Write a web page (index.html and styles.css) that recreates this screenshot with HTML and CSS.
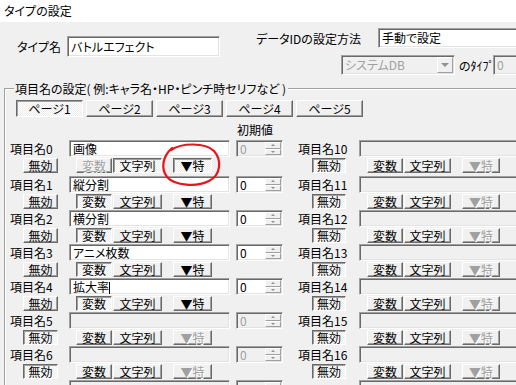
FILE: index.html
```html
<!DOCTYPE html>
<html lang="ja">
<head>
<meta charset="utf-8">
<title>タイプの設定</title>
<link rel="stylesheet" href="styles.css">
</head>
<body>
<div class="win">
  <div class="titlebar">タイプの設定</div>
  <div class="top">
    <div class="tn">
      <span class="tn-label">タイプ名</span>
      <div class="edit tn-edit">バトルエフェクト</div>
    </div>
    <div class="did">
      <div class="did-row1">
        <span class="did-label">データIDの設定方法</span>
        <div class="edit did-edit">手動で設定</div>
      </div>
      <div class="did-row2">
        <div class="edit dis combo"><span class="combo-text">システムDB</span><span class="dd"><i class="td"></i></span></div>
        <span class="type-label">のﾀｲﾌﾟ</span>
        <div class="edit dis type-edit">0</div>
      </div>
    </div>
  </div>
  <div class="group">
    <div class="ghead"><span class="legend">項目名の設定( 例:キャラ名・HP・ピンチ時セリフなど )</span></div>
    <div class="pages">
      <div class="btn pressed page">ページ1</div>
      <div class="btn page">ページ2</div>
      <div class="btn page">ページ3</div>
      <div class="btn page">ページ4</div>
      <div class="btn page">ページ5</div>
    </div>
    <div class="initrow">初期値</div>
    <div class="rows">
      <div class="row">
        <div class="lineA">
          <span class="ilabel">項目名0</span>
          <div class="edit name">画像</div>
          <div class="edit spin dis"><span class="spin-val">0</span><span class="ud"><span class="ud-b"><i class="tu"></i></span><span class="ud-b"><i class="td"></i></span></span></div>
          <span class="ilabel rlabel">項目名10</span>
          <div class="edit dis rname"></div>
        </div>
        <div class="lineB">
          <div class="btn b-mu">無効</div>
          <div class="btn b-hen distext">変数</div>
          <div class="btn b-moji pressed">文字列</div>
          <div class="btn b-toku pressed">▼特</div>
          <div class="btn b-rmu pressed">無効</div>
          <div class="btn b-rhen">変数</div>
          <div class="btn b-rmoji">文字列</div>
          <div class="btn b-rtoku distext">▼特</div>
        </div>
      </div>
      <div class="row">
        <div class="lineA">
          <span class="ilabel">項目名1</span>
          <div class="edit name">縦分割</div>
          <div class="edit spin"><span class="spin-val">0</span><span class="ud"><span class="ud-b"><i class="tu"></i></span><span class="ud-b"><i class="td"></i></span></span></div>
          <span class="ilabel rlabel">項目名11</span>
          <div class="edit dis rname"></div>
        </div>
        <div class="lineB">
          <div class="btn b-mu">無効</div>
          <div class="btn b-hen pressed">変数</div>
          <div class="btn b-moji">文字列</div>
          <div class="btn b-toku">▼特</div>
          <div class="btn b-rmu pressed">無効</div>
          <div class="btn b-rhen">変数</div>
          <div class="btn b-rmoji">文字列</div>
          <div class="btn b-rtoku distext">▼特</div>
        </div>
      </div>
      <div class="row">
        <div class="lineA">
          <span class="ilabel">項目名2</span>
          <div class="edit name">横分割</div>
          <div class="edit spin"><span class="spin-val">0</span><span class="ud"><span class="ud-b"><i class="tu"></i></span><span class="ud-b"><i class="td"></i></span></span></div>
          <span class="ilabel rlabel">項目名12</span>
          <div class="edit dis rname"></div>
        </div>
        <div class="lineB">
          <div class="btn b-mu">無効</div>
          <div class="btn b-hen pressed">変数</div>
          <div class="btn b-moji">文字列</div>
          <div class="btn b-toku">▼特</div>
          <div class="btn b-rmu pressed">無効</div>
          <div class="btn b-rhen">変数</div>
          <div class="btn b-rmoji">文字列</div>
          <div class="btn b-rtoku distext">▼特</div>
        </div>
      </div>
      <div class="row">
        <div class="lineA">
          <span class="ilabel">項目名3</span>
          <div class="edit name">アニメ枚数</div>
          <div class="edit spin"><span class="spin-val">0</span><span class="ud"><span class="ud-b"><i class="tu"></i></span><span class="ud-b"><i class="td"></i></span></span></div>
          <span class="ilabel rlabel">項目名13</span>
          <div class="edit dis rname"></div>
        </div>
        <div class="lineB">
          <div class="btn b-mu">無効</div>
          <div class="btn b-hen pressed">変数</div>
          <div class="btn b-moji">文字列</div>
          <div class="btn b-toku">▼特</div>
          <div class="btn b-rmu pressed">無効</div>
          <div class="btn b-rhen">変数</div>
          <div class="btn b-rmoji">文字列</div>
          <div class="btn b-rtoku distext">▼特</div>
        </div>
      </div>
      <div class="row">
        <div class="lineA">
          <span class="ilabel">項目名4</span>
          <div class="edit name">拡大率<span class="caret"></span></div>
          <div class="edit spin"><span class="spin-val">0</span><span class="ud"><span class="ud-b"><i class="tu"></i></span><span class="ud-b"><i class="td"></i></span></span></div>
          <span class="ilabel rlabel">項目名14</span>
          <div class="edit dis rname"></div>
        </div>
        <div class="lineB">
          <div class="btn b-mu">無効</div>
          <div class="btn b-hen pressed">変数</div>
          <div class="btn b-moji">文字列</div>
          <div class="btn b-toku">▼特</div>
          <div class="btn b-rmu pressed">無効</div>
          <div class="btn b-rhen">変数</div>
          <div class="btn b-rmoji">文字列</div>
          <div class="btn b-rtoku distext">▼特</div>
        </div>
      </div>
      <div class="row">
        <div class="lineA">
          <span class="ilabel">項目名5</span>
          <div class="edit dis name"></div>
          <div class="edit spin dis"><span class="spin-val">0</span><span class="ud"><span class="ud-b"><i class="tu"></i></span><span class="ud-b"><i class="td"></i></span></span></div>
          <span class="ilabel rlabel">項目名15</span>
          <div class="edit dis rname"></div>
        </div>
        <div class="lineB">
          <div class="btn b-mu pressed">無効</div>
          <div class="btn b-hen">変数</div>
          <div class="btn b-moji">文字列</div>
          <div class="btn b-toku distext">▼特</div>
          <div class="btn b-rmu pressed">無効</div>
          <div class="btn b-rhen">変数</div>
          <div class="btn b-rmoji">文字列</div>
          <div class="btn b-rtoku distext">▼特</div>
        </div>
      </div>
      <div class="row">
        <div class="lineA">
          <span class="ilabel">項目名6</span>
          <div class="edit dis name"></div>
          <div class="edit spin dis"><span class="spin-val">0</span><span class="ud"><span class="ud-b"><i class="tu"></i></span><span class="ud-b"><i class="td"></i></span></span></div>
          <span class="ilabel rlabel">項目名16</span>
          <div class="edit dis rname"></div>
        </div>
        <div class="lineB">
          <div class="btn b-mu pressed">無効</div>
          <div class="btn b-hen">変数</div>
          <div class="btn b-moji">文字列</div>
          <div class="btn b-toku distext">▼特</div>
          <div class="btn b-rmu pressed">無効</div>
          <div class="btn b-rhen">変数</div>
          <div class="btn b-rmoji">文字列</div>
          <div class="btn b-rtoku distext">▼特</div>
        </div>
      </div>
      <div class="row">
        <div class="lineA">
          <span class="ilabel"></span>
          <div class="edit dis name"></div>
          <div class="edit spin dis"><span class="ud"><span class="ud-b"></span><span class="ud-b"></span></span></div>
          <span class="ilabel rlabel"></span>
          <div class="edit dis rname"></div>
        </div>
      </div>
    </div>
  </div>
  <svg class="mark" width="72" height="52" viewBox="0 0 72 52"><path d="M16 10 C26 3, 50 2, 59 11 C67 20, 66 35, 54 41 C42 47, 20 46, 12 37 C6 29, 7 17, 17 8" fill="none" stroke="#e8141c" stroke-width="2.2" stroke-linecap="round"/></svg>
</div>
</body>
</html>
```

FILE: styles.css
```css
* { box-sizing: border-box; }
html, body { margin: 0; padding: 0; }
body {
  background: #f0f0f0;
  font-family: "MS UI Gothic", "Noto Sans CJK JP", sans-serif;
  font-size: 12px;
  color: #000;
  font-feature-settings: "palt";
}
i { display: block; }
.win { position: relative; width: 516px; height: 385px; overflow: hidden; background: #f0f0f0; }
.titlebar { height: 22px; background: #fff; line-height: 22px; padding-left: 4px; }

.edit {
  border: 1px solid;
  border-color: #a0a0a0 #fff #fff #a0a0a0;
  box-shadow: inset 1px 1px 0 #696969, inset -1px -1px 0 #e3e3e3;
  background: #fff;
  padding-left: 3px;
  white-space: nowrap;
  overflow: hidden;
  flex: none;
}
.edit.dis { background: #f0f0f0; color: #a0a0a0; }

.btn {
  flex: none;
  height: 15px;
  line-height: 13px;
  text-align: center;
  white-space: nowrap;
  border: 1px solid;
  border-color: #fff #696969 #696969 #fff;
  box-shadow: inset -1px -1px 0 #a0a0a0;
  background: #f0f0f0;
}
.btn.pressed {
  border-color: #696969 #fff #fff #696969;
  box-shadow: inset 1px 1px 0 #a0a0a0;
  background: repeating-conic-gradient(#fff 0 25%, #ececec 0 50%) 0 0 / 2px 2px;
}
.distext { color: #a0a0a0; text-shadow: 1px 1px 0 #fff; }

.top { display: flex; height: 66px; }
.tn { display: flex; align-items: center; margin: 14px 0 0 17px; height: 21px; flex: none; }
.tn-label { width: 50px; }
.tn-edit { width: 153px; height: 21px; line-height: 19px; }
.did { flex: none; margin: 6px 0 0 36px; display: flex; flex-direction: column; gap: 7px; }
.did-row1, .did-row2 { display: flex; align-items: center; height: 20px; }
.did-label { width: 122px; flex: none; }
.did-edit { width: 160px; height: 20px; line-height: 18px; }
.did-row2 { padding-left: 85px; }
.combo { width: 114px; height: 20px; display: flex; padding-left: 0; }
.combo-text { flex: 1; padding-left: 3px; line-height: 18px; }
.dd {
  width: 16px; margin: 1px 1px 1px 0;
  border: 1px solid; border-color: #fff #a0a0a0 #a0a0a0 #fff;
  background: #f0f0f0;
  display: flex; align-items: center; justify-content: center;
}
.dd .td { border-left-width: 4px; border-right-width: 4px; border-top-width: 4px; }
.type-label { width: 34px; margin-left: 4px; flex: none; white-space: nowrap; }
.type-edit { width: 30px; height: 20px; line-height: 18px; }

.group {
  margin-left: 4px;
  width: 600px;
  height: 400px;
  border-top: 1px solid #a0a0a0;
  border-left: 1px solid #a0a0a0;
  box-shadow: inset 1px 1px 0 #fff;
}
.ghead { display: flex; margin-top: -8px; height: 15px; }
.legend { margin-left: 9px; padding: 0 2px 0 1px; background: #f0f0f0; line-height: 15px; white-space: nowrap; }
.pages { display: flex; gap: 3px; margin: 4px 0 0 11px; }
.page { width: 67px; height: 17px; line-height: 15px; }
.initrow { height: 23px; padding: 6px 0 0 232px; line-height: 14px; }

.row { height: 34px; }
.row:first-child { height: 36px; }
.lineA { display: flex; align-items: center; height: 17px; padding-left: 5px; }
.ilabel { width: 59px; flex: none; white-space: nowrap; }
.name { width: 161px; height: 17px; line-height: 15px; }
.caret { display: inline-block; width: 1px; height: 12px; background: #000; vertical-align: -2px; }
.spin { margin-left: 6px; width: 47px; height: 17px; display: flex; justify-content: flex-end; padding-left: 0; }
.spin-val { flex: 1; padding-left: 3px; line-height: 15px; }
.ud { width: 16px; display: flex; flex-direction: column; margin: 1px 1px 1px 0; }
.ud-b {
  flex: 1;
  border: 1px solid; border-color: #fff #a0a0a0 #a0a0a0 #fff;
  background: #f0f0f0;
  display: flex; align-items: center; justify-content: center;
}
.tu { width: 0; height: 0; border-left: 2px solid transparent; border-right: 2px solid transparent; border-bottom: 2px solid #909090; }
.td { width: 0; height: 0; border-left: 2px solid transparent; border-right: 2px solid transparent; border-top: 2px solid #909090; }
.rlabel { margin-left: 15px; width: 61px; }
.rname { width: 170px; height: 17px; }

.lineB { display: flex; height: 15px; margin-top: 1px; }
.b-mu { margin-left: 18px; width: 35px; }
.b-hen { margin-left: 18px; width: 36px; }
.b-moji { margin-left: 1px; width: 49px; }
.b-toku { margin-left: 11px; width: 39px; }
.b-rmu { margin-left: 100px; width: 34px; }
.b-rhen { margin-left: 21px; width: 36px; }
.b-rmoji { margin-left: 1px; width: 47px; }
.b-rtoku { margin-left: 11px; width: 38px; }

.mark { position: absolute; left: 155px; top: 140px; }
```
